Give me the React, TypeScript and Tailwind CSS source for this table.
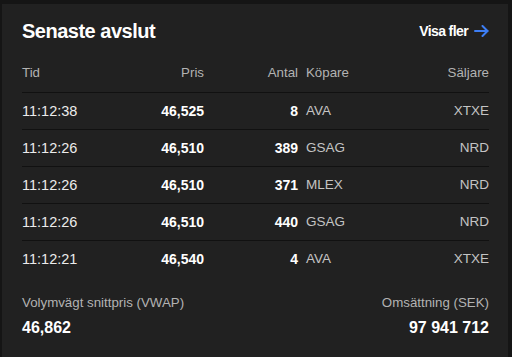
import React from 'react';

// --- DATA ---
const trades = [
  { time: "11:12:38", price: "46,525", qty: "8", buyer: "AVA", seller: "XTXE" },
  { time: "11:12:26", price: "46,510", qty: "389", buyer: "GSAG", seller: "NRD" },
  { time: "11:12:26", price: "46,510", qty: "371", buyer: "MLEX", seller: "NRD" },
  { time: "11:12:26", price: "46,510", qty: "440", buyer: "GSAG", seller: "NRD" },
  { time: "11:12:21", price: "46,540", qty: "4", buyer: "AVA", seller: "XTXE" },
];

const cols = "grid grid-cols-[92px_90px_94px_1fr_1fr] items-center";

export default function App() {
  return (
    <div className="min-h-screen w-full bg-[#151515] pt-[4px] pl-[2px] font-['Liberation_Sans',Arial,sans-serif]">
      <section className="w-[506px] h-[353px] bg-[#212121] pl-[20px] pr-[19px] pt-[14px]">
        {/* HEADER */}
        <div className="flex items-center justify-between h-[26px]">
          <h2 className="text-[20px] font-bold tracking-[-0.5px] text-white leading-[26px]">Senaste avslut</h2>
          <a className="flex items-center gap-[6px] text-[14px] font-bold tracking-[-0.6px] text-white">
            Visa fler
            <svg width="15" height="12" viewBox="0 0 15 12" fill="none" stroke="#3d7ef5" strokeWidth="2" strokeLinecap="round" strokeLinejoin="round">
              <path d="M1 6h12.5" />
              <path d="M8.5 1l5 5-5 5" />
            </svg>
          </a>
        </div>

        {/* TABLE */}
        <div className="mt-[19px] text-[14px] leading-[20px]">
          <div className={`${cols} pb-[9px] text-[13.3px] text-[#b3b3b3]`}>
            <span>Tid</span>
            <span className="text-right">Pris</span>
            <span className="text-right">Antal</span>
            <span className="pl-[8px]">Köpare</span>
            <span className="text-right">Säljare</span>
          </div>
          {trades.map((t, i) => (
            <div key={i} className={`${cols} h-[37px] border-t border-[#111111]`}>
              <span className="text-[14.5px] text-[#ececec]">{t.time}</span>
              <span className="text-right font-bold text-white">{t.price}</span>
              <span className="text-right font-bold text-white">{t.qty}</span>
              <span className="pl-[8px] text-[13.5px] text-[#c4c4c4]">{t.buyer}</span>
              <span className="text-right text-[13.5px] text-[#c4c4c4]">{t.seller}</span>
            </div>
          ))}
        </div>

        {/* FOOTER */}
        <div className="mt-[16px] flex justify-between">
          <div className="flex flex-col gap-[3px]">
            <span className="text-[13.3px] leading-[20px] text-[#b3b3b3]">Volymvägt snittpris (VWAP)</span>
            <span className="text-[16px] leading-[24px] font-bold text-white">46,862</span>
          </div>
          <div className="flex flex-col gap-[3px] items-end">
            <span className="text-[13.3px] leading-[20px] text-[#b3b3b3]">Omsättning (SEK)</span>
            <span className="text-[16px] leading-[24px] font-bold text-white">97 941 712</span>
          </div>
        </div>
      </section>
    </div>
  );
}
